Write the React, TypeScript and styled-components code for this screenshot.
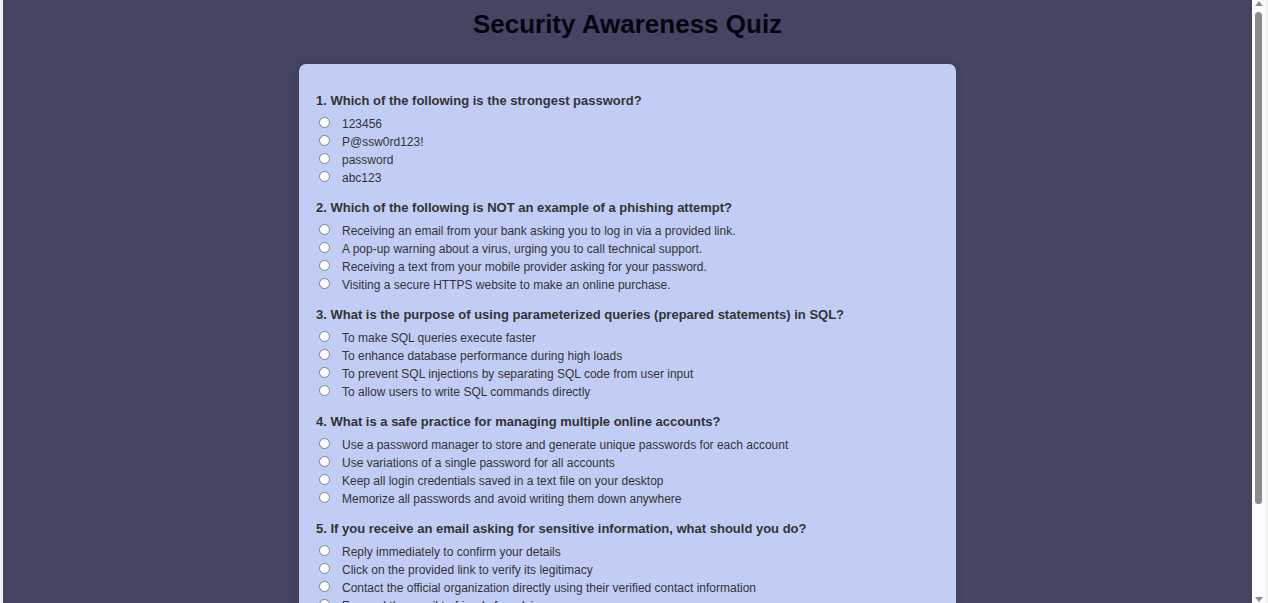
import React from "react";
import styled, { createGlobalStyle } from "styled-components";

const GlobalStyle = createGlobalStyle`
  * { box-sizing: border-box; }
  body {
    margin: 0;
    font-family: "Liberation Sans", Arial, sans-serif;
    color: #333333;
    background: #444463;
  }
`;

const Screen = styled.div`
  display: flex;
  height: 100vh;
  overflow: hidden;
  border-left: 3px solid #f4f4f6;
`;

const Page = styled.main`
  flex: 1;
  min-width: 0;
  overflow: hidden;
  display: flex;
  flex-direction: column;
  align-items: center;
  background: #444463;
`;

const Title = styled.h1`
  flex: none;
  margin: 8px 0 24px;
  font-size: 26px;
  line-height: 32px;
  color: #04040e;
`;

const Card = styled.form`
  flex: none;
  width: 100%;
  max-width: 657px;
  padding: 28px 17px;
  background: #c2cdf6;
  border-radius: 7px;
  box-shadow: 0 0 8px rgba(0, 0, 0, 0.12);
`;

const Question = styled.fieldset`
  margin: 0 0 12px;
  padding: 0;
  border: 0;
  min-width: 0;
`;

const Prompt = styled.legend`
  padding: 0;
  margin-bottom: 5px;
  font-size: 13px;
  font-weight: bold;
  line-height: 18px;
`;

const Option = styled.label`
  display: flex;
  align-items: flex-start;
  gap: 12px;
  padding-left: 3px;
  font-size: 12px;
  line-height: 18px;
`;

const Radio = styled.input`
  appearance: none;
  flex: none;
  width: 11px;
  height: 11px;
  margin: 2px 0 0;
  border: 1px solid #7c7f8c;
  border-radius: 50%;
  background: #ffffff;

  &:checked {
    border: 3px solid #0075ff;
  }
`;

const ScrollTrack = styled.div`
  flex: none;
  width: 16px;
  display: flex;
  flex-direction: column;
  align-items: center;
  justify-content: space-between;
  padding: 1px 0;
  background: #fcfcfc;
  border-right: 3px solid #f4f4f4;
`;

const ScrollArea = styled.div`
  flex: 1;
  width: 7px;
  padding: 6px 0;
`;

const Thumb = styled.div`
  height: 85%;
  border-radius: 4px;
  background: #8b8b8b;
`;

const questions = [
  {
    prompt: "Which of the following is the strongest password?",
    options: ["123456", "P@ssw0rd123!", "password", "abc123"],
  },
  {
    prompt: "Which of the following is NOT an example of a phishing attempt?",
    options: [
      "Receiving an email from your bank asking you to log in via a provided link.",
      "A pop-up warning about a virus, urging you to call technical support.",
      "Receiving a text from your mobile provider asking for your password.",
      "Visiting a secure HTTPS website to make an online purchase.",
    ],
  },
  {
    prompt: "What is the purpose of using parameterized queries (prepared statements) in SQL?",
    options: [
      "To make SQL queries execute faster",
      "To enhance database performance during high loads",
      "To prevent SQL injections by separating SQL code from user input",
      "To allow users to write SQL commands directly",
    ],
  },
  {
    prompt: "What is a safe practice for managing multiple online accounts?",
    options: [
      "Use a password manager to store and generate unique passwords for each account",
      "Use variations of a single password for all accounts",
      "Keep all login credentials saved in a text file on your desktop",
      "Memorize all passwords and avoid writing them down anywhere",
    ],
  },
  {
    prompt: "If you receive an email asking for sensitive information, what should you do?",
    options: [
      "Reply immediately to confirm your details",
      "Click on the provided link to verify its legitimacy",
      "Contact the official organization directly using their verified contact information",
      "Forward the email to friends for advice",
    ],
  },
];

export default function App() {
  return (
    <>
      <GlobalStyle />
      <Screen>
        <Page>
          <Title>Security Awareness Quiz</Title>
          <Card>
            {questions.map((question, index) => (
              <Question key={question.prompt}>
                <Prompt>{`${index + 1}. ${question.prompt}`}</Prompt>
                {question.options.map((option) => (
                  <Option key={option}>
                    <Radio type="radio" name={`q${index + 1}`} value={option} />
                    <span>{option}</span>
                  </Option>
                ))}
              </Question>
            ))}
          </Card>
        </Page>
        <ScrollTrack aria-hidden="true">
          <svg width="8" height="5" viewBox="0 0 8 5">
            <path d="M4 0 L8 5 H0 Z" fill="#8b8b8b" />
          </svg>
          <ScrollArea>
            <Thumb />
          </ScrollArea>
          <svg width="8" height="5" viewBox="0 0 8 5">
            <path d="M0 0 H8 L4 5 Z" fill="#8b8b8b" />
          </svg>
        </ScrollTrack>
      </Screen>
    </>
  );
}
